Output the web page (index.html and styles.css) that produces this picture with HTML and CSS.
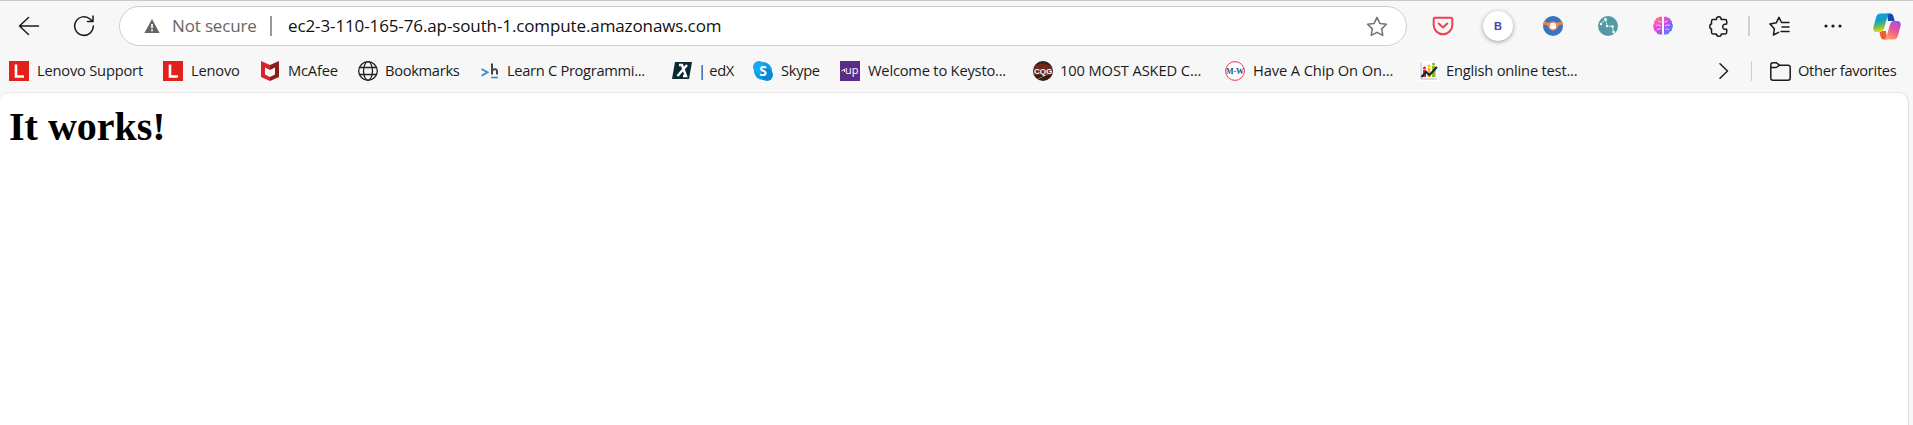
FILE: index.html
```html
<!DOCTYPE html>
<html lang="en">
<head>
<meta charset="utf-8">
<title>ec2-3-110-165-76.ap-south-1.compute.amazonaws.com</title>
<link rel="stylesheet" href="styles.css">
</head>
<body>
<header class="chrome">
  <div class="toolbar">
    <svg class="back" width="22" height="20" viewBox="0 0 22 20"><path d="M20.500 10H1.500M10.500 1.500L1.500 10l9 8.500"/></svg>
    <svg class="reload" width="22" height="22" viewBox="0 0 22 22"><path d="M20.300 11a9.300 9.300 0 1 1-3-6.800l2.200 2M20 1v5.500h-5.500"/></svg>
    <div class="address">
      <svg class="warn" width="16" height="14" viewBox="0 0 16 14"><path d="M8 0l7.600 14H.4z" fill="#666"/><path d="M8 5v4.200M8 10.500v1.800" stroke="#fff" stroke-width="1.700"/></svg>
      <span class="not-secure">Not secure</span>
      <i class="address-rule"></i>
      <span class="url">ec2-3-110-165-76.ap-south-1.compute.amazonaws.com</span>
      <svg class="star" width="22" height="21" viewBox="0 0 22 21"><path d="M11 1.400l2.900 6 6.500.9-4.700 4.600 1.100 6.500L11 16.300l-5.800 3.100 1.100-6.500L1.600 8.300l6.500-.9z"/></svg>
    </div>
    <svg class="pocket" width="22" height="20" viewBox="0 0 22 20"><path d="M3 1.700h16q1.300 0 1.300 1.300v6a9.300 9.300 0 0 1-18.600 0V3Q1.700 1.700 3 1.700z" fill="none" stroke="#ef4056" stroke-width="2"/><path d="M6.700 7.500L11 11.500l4.300-4" fill="none" stroke="#ef4056" stroke-width="2" stroke-linecap="round" stroke-linejoin="round"/></svg>
    <span class="b-badge">B</span>
    <svg class="orbit" width="20" height="20" viewBox="0 0 20 20"><circle cx="10" cy="10" r="10" fill="#3773bf"/><path d="M.8 5.600L6.300 6.800a5 5 0 0 1 7.400 0L19.200 5.600 20 8l-5 1.800a5 5 0 1 1-10 0L0 8z" fill="#f58345"/><circle cx="10" cy="10" r="3.200" fill="#fff"/></svg>
    <svg class="ext" width="20" height="20" viewBox="0 0 20 20"><circle cx="10" cy="10" r="10" fill="#529aa5"/><path d="M3 8l4.500-5L9 10l5.500.5 1 5.500" fill="none" stroke="#fff" stroke-width=".9" stroke-dasharray="2 .6"/><g fill="#fff"><circle cx="3" cy="8" r="1.200"/><circle cx="7.500" cy="3.500" r="1.400"/><circle cx="9" cy="10" r="1.200"/><circle cx="14.500" cy="10.500" r="1.300"/><circle cx="15.500" cy="16" r="1.300"/></g></svg>
    <svg class="ext" width="20" height="20" viewBox="0 0 20 20"><defs><linearGradient id="brain" x1="0" y1="0" x2="20" y2="20" gradientUnits="userSpaceOnUse"><stop stop-color="#ff9a35"/><stop offset=".35" stop-color="#f44bd2"/><stop offset=".65" stop-color="#8a5cf8"/><stop offset="1" stop-color="#25b5f5"/></linearGradient></defs><path fill="url(#brain)" d="M9 .9Q7 0 5.500 1.400 2.500 1.500 2.600 4 .6 5 1 7.500-.8 9.500.7 12q-.2 3 2.300 3.500Q4 18.600 6.500 18.300q1.500.8 2.500 0zM11 .9q2-.9 3.500.5 3 .1 2.900 2.600 2 1 1.600 3.500 1.800 2 .3 4.500.2 3-2.300 3.500-1 3.100-3.500 2.800-1.500.8-2.500 0z"/><path d="M5.500 4.500q1 2 3 1.500M3 9.500q2.500-1.500 5 .5M4 14q1.500-2 3.500-.8M14.500 4.500q-1 2-3 1.500M17 9.500q-2.500-1.500-5 .5M16 14q-1.500-2-3.500-.8" stroke="#f4e9ff" stroke-width=".9" fill="none"/></svg>
    <svg class="line puzzle" width="20" height="21" viewBox="0 0 20 21"><path d="M4 3.500h3.500q-.3-2.700 2.300-2.700t2.300 2.700H16q1.700 0 1.700 1.700V8q-4-.2-4 2.700t4 2.500v3q0 1.700-1.700 1.700h-3.700q0 2.500-2.400 2.500t-2.500-2.500H4q-1.500 0-1.500-1.700V13Q.8 12.800.8 10.500T2.500 8V5.200Q2.500 3.500 4 3.500z"/></svg>
    <i class="toolbar-rule"></i>
    <svg class="line favorites" width="21" height="20" viewBox="0 0 21 20"><path d="M12.500 6.500L10 1.300 7.300 6.800.9 8l4.500 4.700-1 6.300 5.200-2.700M12.500 6.500H20M13 11h7M12 15.500h8"/></svg>
    <svg class="more" width="18" height="4" viewBox="0 0 18 4"><circle cx="2" cy="2" r="1.600"/><circle cx="9" cy="2" r="1.600"/><circle cx="16" cy="2" r="1.600"/></svg>
    <svg class="copilot" width="28" height="27" viewBox="0 0 28 27"><defs><linearGradient id="cp1" x2=".2" y2="1"><stop stop-color="#1598ed"/><stop offset=".45" stop-color="#19a0c0"/><stop offset=".75" stop-color="#72bd55"/><stop offset="1" stop-color="#e9d716"/></linearGradient><linearGradient id="cp2" x1=".8" x2=".3" y2="1"><stop stop-color="#a34be8"/><stop offset=".5" stop-color="#ee5590"/><stop offset="1" stop-color="#ffa45f"/></linearGradient></defs><path d="M14 .5h3.500q2.200 0 3 3l1.200 4.500H15z" fill="#1647b8"/><path d="M14 26.500h-3.500q-2.200 0-3-3L6.300 18H13z" fill="#f15b37"/><path d="M7.500.5H17q-2 .8-3 4.500l-3 10.500q-1 3.500-4 3.500H4q-4.500 0-3.500-5L3 4.500q1-4 4.500-4z" fill="url(#cp1)"/><path d="M20.500 26.500H11q2-.8 3-4.500l3-10.500Q18 8 21 8h3q4.500 0 3.500 5L25 22.500q-1 4-4.500 4z" fill="url(#cp2)"/></svg>
  </div>
  <nav class="bookmarks">
    <a style="width:154px"><svg width="20" height="20"><path fill="#e3201b" d="M0 0h20v20H0z"/><path d="M7 3.500v12h8" fill="none" stroke="#fff" stroke-width="2.600"/></svg><span class="snug">Lenovo Support</span></a>
    <a style="width:97px"><svg width="20" height="20"><path fill="#e3201b" d="M0 0h20v20H0z"/><path d="M7 3.500v12h8" fill="none" stroke="#fff" stroke-width="2.600"/></svg><span class="snug">Lenovo</span></a>
    <a style="width:98px"><svg width="20" height="20"><path d="M1 0l9 4v5L5 6.500v7l5 2.500v4l-9-4z" fill="#d8232a"/><path d="M19 0l-9 4v5l5-2.500v7L10 16v4l9-4z" fill="#8d1b19"/></svg><span class="snug">McAfee</span></a>
    <a class="close" style="width:123px"><svg width="20" height="20" fill="none" stroke="#222" stroke-width="1.300"><circle cx="10" cy="10" r="9.300"/><ellipse cx="10" cy="10" rx="4.500" ry="9.300"/><path d="M1.500 6.500h17M1.500 13.500h17"/></svg><span class="tight">Bookmarks</span></a>
    <a class="close" style="width:191px"><svg class="nudge" width="20" height="20"><path d="M1.500 8l6 3.300-6 3.400" fill="none" stroke="#3489c9" stroke-width="1.800"/><path d="M12 2.500v11M12 9q5-2 5 1v3.500" fill="none" stroke="#444" stroke-width="2"/><path d="M11 16.500h7" stroke="#3489c9" stroke-width="1.600"/></svg><span class="tight">Learn C Programmi...</span></a>
    <a class="closer" style="width:81px"><svg width="20" height="20"><path d="M3 1h17l-3 17H0z" fill="#0b2a30"/><path d="M7 4h3l4 11h-3M15 4L5.500 15" fill="none" stroke="#fff" stroke-width="2.400"/></svg><span class="tight">| edX</span></a>
    <a style="width:87px"><svg width="20" height="20"><circle cx="10" cy="10" r="9" fill="#0b9ce9"/><circle cx="6" cy="6" r="6" fill="#14a9f0"/><circle cx="14" cy="14" r="6" fill="#0788d9"/><text x="10" y="15" text-anchor="middle" class="skype-s">S</text></svg><span class="tight">Skype</span></a>
    <a style="width:193px"><svg width="20" height="20"><path fill="#592c87" d="M0 0h20v20H0z"/><path d="M1.500 10l3-1.800V11" fill="none" stroke="#fff"/><text x="5" y="13" class="up">up</text></svg><span class="snug">Welcome to Keysto...</span></a>
    <a class="close" style="width:192px"><svg width="20" height="20"><circle cx="10" cy="10" r="10" fill="#302019"/><path d="M1 6q8-7 18 0v8H1z" fill="#702819"/><path d="M5 18l10-5" stroke="#9a7546"/><text x="10" y="13" text-anchor="middle" class="cqg">CQG</text></svg><span class="slight">100 MOST ASKED C...</span></a>
    <a style="width:194px"><svg width="20" height="20"><circle cx="10" cy="10" r="9.400" fill="#fff" stroke="#e33e49"/><text x="10" y="12.600" text-anchor="middle" class="mw">M-W</text></svg><span class="slight">Have A Chip On On...</span></a>
    <a class="last close"><svg width="20" height="20"><path fill="#fff" d="M0 0h20v20H0z"/><path d="M2 1v17h16" fill="none" stroke="#aeb9c2"/><path d="M4 9h3v7H4z" fill="#e21b35"/><circle cx="5.500" cy="7" r="1.500" fill="#e21b35"/><path d="M8.500 7h3v9h-3z" fill="#f4bd16"/><circle cx="10" cy="5" r="1.500" fill="#f4bd16"/><path d="M13 5h3.500v11H13z" fill="#87ba24"/><circle cx="14.500" cy="3" r="1.500" fill="#87ba24"/><path d="M2.500 16l4.500-5 3.500 3L18 6" fill="none" stroke="#14263d" stroke-width="2"/></svg><span class="snug">English online test...</span></a>
    <svg class="line chevron" width="10" height="16" viewBox="0 0 10 16"><path d="M1 .8L8.500 8 1 15.200"/></svg>
    <i class="bookmark-rule"></i>
    <svg class="line folder" width="21" height="19" viewBox="0 0 21 19"><path d="M.8 5.500V3Q.8.800 3 .8h3.500L9.500 3.200H18q2.200 0 2.200 2.200V16q0 2.200-2.200 2.200H3Q.8 18.200.8 16V5.500h5.500L9.500 3.200"/></svg>
    <span class="other tight">Other favorites</span>
  </nav>
</header>
<main class="page"><h1>It works!</h1></main>
</body>
</html>
```
FILE: styles.css
```css
* { box-sizing: border-box; }
body { margin: 0; height: 425px; overflow: hidden; background: #f7f7f7; color: #1b1b1b; font-family: "Segoe UI", "Open Sans", "Noto Sans", sans-serif; display: flex; flex-direction: column; }
svg { display: block; flex: none; }
.chrome { height: 92px; flex: none; border-top: 1px solid #c9c9c9; }
.toolbar { height: 50px; display: flex; align-items: center; }
.back, .reload, .line, .star { fill: none; stroke: #1b1b1b; stroke-width: 1.5; stroke-linejoin: round; stroke-linecap: round; }
.back { margin-left: 18px; }
.reload { margin-left: 33px; }
.address { width: 1288px; height: 40px; flex: none; margin-left: 24px; border: 1px solid #cecece; border-radius: 20px; background: #fff; display: flex; align-items: center; font-size: 17px; line-height: 24px; }
.warn { margin-left: 24px; }
.not-secure { width: 84px; margin-left: 12px; color: #666; white-space: nowrap; letter-spacing: -.15px; }
.address-rule { width: 2px; height: 20px; margin-left: 14px; background: #999; }
.url { margin-left: 16px; color: #111; white-space: nowrap; letter-spacing: -.115px; }
.star { margin-left: auto; margin-right: 18px; stroke: #737373; }
.pocket { margin-left: 25px; }
.b-badge { width: 30px; height: 30px; flex: none; margin-left: 29px; border-radius: 50%; background: #fff; box-shadow: 0 1px 4px #999; display: grid; place-items: center; font: bold 11px "Liberation Sans", sans-serif; color: #433fb5; }
.orbit { margin-left: 30px; }
.ext { margin-left: 35px; }
.puzzle { margin-left: 36px; }
.toolbar-rule { width: 2px; height: 20px; flex: none; margin-left: 19px; background: #d0d0d0; }
.favorites { margin-left: 19px; }
.more { margin-left: 34px; fill: #1b1b1b; }
.copilot { margin-left: 31px; }
.bookmarks { height: 40px; padding-left: 9px; display: flex; align-items: center; font-size: 14.7px; line-height: 20px; white-space: nowrap; }
.bookmarks a { height: 20px; display: flex; align-items: center; gap: 8px; flex: none; }
.bookmarks .close { gap: 7px; }
.bookmarks .closer { gap: 6px; }
.bookmarks .last { width: 290px; }
.bookmarks span { padding-bottom: 2px; }
.slight { letter-spacing: -.12px; }
.snug { letter-spacing: -.21px; }
.tight { letter-spacing: -.32px; }
.nudge { margin-left: -1px; }
.skype-s { font: bold 14px "Open Sans", sans-serif; fill: #fff; }
.up { font: 11px "Open Sans", sans-serif; fill: #fff; letter-spacing: 0; }
.cqg { font: bold 8px "Liberation Sans", sans-serif; fill: #fff; }
.mw { font: bold 8px "Liberation Serif", serif; fill: #245698; }
.chevron { margin-left: 10px; }
.bookmark-rule { width: 1px; height: 20px; margin-left: 22px; background: #cfcfcf; }
.folder { margin-left: 18px; }
.other { margin-left: 7px; }
.page { width: 1909px; flex: 1; background: #fff; border-top: 1px solid #e7e7e7; border-right: 1px solid #ddd; border-radius: 10px 10px 0 0; }
h1 { margin: 11px 9px; font: bold 40px/46px "Liberation Serif", serif; color: #000; }
```
